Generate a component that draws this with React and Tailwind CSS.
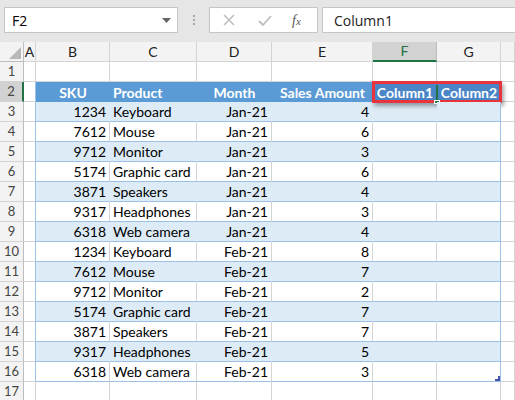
import React from "react";

const data = [
  [1234, "Keyboard", "Jan-21", 4],
  [7612, "Mouse", "Jan-21", 6],
  [9712, "Monitor", "Jan-21", 3],
  [5174, "Graphic card", "Jan-21", 6],
  [3871, "Speakers", "Jan-21", 4],
  [9317, "Headphones", "Jan-21", 3],
  [6318, "Web camera", "Jan-21", 4],
  [1234, "Keyboard", "Feb-21", 8],
  [7612, "Mouse", "Feb-21", 7],
  [9712, "Monitor", "Feb-21", 2],
  [5174, "Graphic card", "Feb-21", 7],
  [3871, "Speakers", "Feb-21", 7],
  [9317, "Headphones", "Feb-21", 5],
  [6318, "Web camera", "Feb-21", 3],
];

const font = { fontFamily: "Lato, 'Liberation Sans', sans-serif" };

function RowHead({ n, selected }) {
  return (
    <div
      className={
        "h-5 flex items-center justify-center text-[13px] leading-none text-[#444] border-b border-[#d4d4d4] " +
        (selected
          ? "bg-[#d2d2d2] border-r-2 border-r-[#217346]"
          : "bg-[#f3f3f3] border-r border-r-[#bdbdbd]")
      }
    >
      {n}
    </div>
  );
}

function Plain({ extra = "" }) {
  return <div className={"h-5 bg-white border-r border-b border-[#d4d4d4] " + extra} />;
}

export default function App() {
  const cols = ["A", "B", "C", "D", "E", "F", "G", ""];
  return (
    <div className="w-[515px] h-[400px] overflow-hidden bg-white text-black" style={font}>
      {/* formula bar */}
      <div className="h-[42px] bg-[#e6e6e6] flex items-start pt-[7px] pl-1 gap-0">
        <div className="w-[174px] h-[26px] bg-white border border-[#c6c6c6] flex items-center justify-between pl-[7px] pr-[6px]">
          <span className="text-[14px]" style={{ fontFamily: "'Open Sans', sans-serif" }}>F2</span>
          <svg width="9" height="5" viewBox="0 0 9 5">
            <path d="M0 0h9L4.5 5z" fill="#666" />
          </svg>
        </div>
        <div className="w-[31px] h-[26px] flex flex-col items-center justify-center gap-[2px]">
          <span className="w-[2px] h-[2px] bg-[#a6a6a6]" />
          <span className="w-[2px] h-[2px] bg-[#a6a6a6]" />
          <span className="w-[2px] h-[2px] bg-[#a6a6a6]" />
        </div>
        <div className="w-[109px] h-[26px] bg-white border border-[#c6c6c6] flex items-center">
          <svg width="12" height="12" viewBox="0 0 12 12" className="ml-[13px]">
            <path d="M1 1l10 10M11 1L1 11" stroke="#bdbdbd" strokeWidth="1.5" />
          </svg>
          <svg width="14" height="11" viewBox="0 0 14 11" className="ml-[23px]">
            <path d="M1 6l4 4L13 1" stroke="#bdbdbd" strokeWidth="1.8" fill="none" />
          </svg>
          <span
            className="ml-[20px] text-[14px] italic text-[#555]"
            style={{ fontFamily: "'Liberation Serif', serif" }}
          >
            f<span className="text-[11px]">x</span>
          </span>
        </div>
        <div className="ml-[4px] flex-1 h-[26px] bg-white border border-[#c6c6c6] border-r-0 flex items-center pl-[11px]">
          <span className="text-[14px] text-[#222]" style={{ fontFamily: "'Open Sans', sans-serif" }}>Column1</span>
        </div>
      </div>

      {/* grid */}
      <div className="grid grid-cols-[24px_12px_74px_87px_75px_101px_64px_64px_1fr]">
        {/* column headers */}
        <div className="h-5 bg-[#f3f3f3] border-r border-b border-[#bdbdbd] relative">
          <svg width="12" height="12" viewBox="0 0 12 12" className="absolute right-[2px] bottom-[2px]">
            <path d="M12 0V12H0z" fill="#b8b8b8" />
          </svg>
        </div>
        {cols.map((c, i) => (
          <div
            key={i}
            className={
              "h-5 flex items-center justify-center text-[14px] leading-none " +
              (c === "F"
                ? "bg-[#d2d2d2] text-[#217346] border-r border-r-[#bdbdbd] border-b-2 border-b-[#217346]"
                : "bg-[#f3f3f3] text-[#222] border-r border-b border-[#d4d4d4]")
            }
          >
            {c}
          </div>
        ))}

        {/* row 1 */}
        <RowHead n={1} />
        <Plain />
        <Plain />
        <Plain />
        <Plain />
        <Plain />
        <Plain />
        <Plain />
        <Plain />

        {/* row 2 header row */}
        <RowHead n={2} selected />
        <div className="h-5 bg-white border-r border-r-[#9bc2e6] border-b border-b-[#d4d4d4]" />
        <div className="h-5 bg-[#5b9bd5] text-white font-bold text-[14px] flex items-center justify-center">SKU</div>
        <div className="h-5 bg-[#5b9bd5] text-white font-bold text-[14px] flex items-center px-[3px]">Product</div>
        <div className="h-5 bg-[#5b9bd5] text-white font-bold text-[14px] flex items-center justify-center">Month</div>
        <div className="h-5 bg-[#5b9bd5] text-white font-bold text-[14px] flex items-center justify-center">Sales Amount</div>
        <div className="col-span-2 h-5 relative flex">
          <div className="w-[64px] h-5 bg-[#4a86c6] text-white font-bold text-[14px] flex items-center justify-center">Column1</div>
          <div className="w-[64px] h-5 bg-[#4a86c6] text-white font-bold text-[14px] flex items-center justify-center">Column2</div>
          <div className="absolute -left-[1px] -top-[1px] -right-[1px] -bottom-[1px] border-[3px] border-[#e8343c] shadow-[2px_3px_4px_rgba(0,0,0,0.35)]" />
          <div className="absolute left-[63px] top-[3px] w-[2px] h-[16px] bg-[#217346]" />
          <div className="absolute left-[61px] top-[18px] w-[6px] h-[4px] bg-[#217346] border border-white" />
        </div>
        <Plain />

        {/* data rows */}
        {data.map((r, i) => {
          const band = i % 2 === 0;
          const cell =
            "h-5 flex items-center text-[14px] leading-none px-[3px] border-b border-b-[#9bc2e6] " +
            (band ? "bg-[#ddebf7] border-r border-r-[#ddebf7] " : "bg-white border-r border-r-[#d4d4d4] ");
          return (
            <React.Fragment key={i}>
              <RowHead n={i + 3} />
              <div className="h-5 bg-white border-r border-r-[#9bc2e6] border-b border-b-[#d4d4d4]" />
              <div className={cell + "justify-end"}>{r[0]}</div>
              <div className={cell}>{r[1]}</div>
              <div className={cell + "justify-end"}>{r[2]}</div>
              <div className={cell + "justify-end"}>{r[3]}</div>
              <div className={cell} />
              <div
                className={
                  "h-5 relative border-b border-b-[#9bc2e6] border-r border-r-[#9bc2e6] " +
                  (band ? "bg-[#ddebf7]" : "bg-white")
                }
              >
                {i === data.length - 1 && (
                  <svg width="5" height="5" viewBox="0 0 5 5" className="absolute right-0 bottom-0">
                    <path d="M5 0V5H0V3H3V0z" fill="#4553b0" />
                  </svg>
                )}
              </div>
              <Plain />
            </React.Fragment>
          );
        })}

        {/* row 17 */}
        <RowHead n={17} />
        <Plain />
        <Plain />
        <Plain />
        <Plain />
        <Plain />
        <Plain />
        <Plain />
        <Plain />
      </div>
    </div>
  );
}
